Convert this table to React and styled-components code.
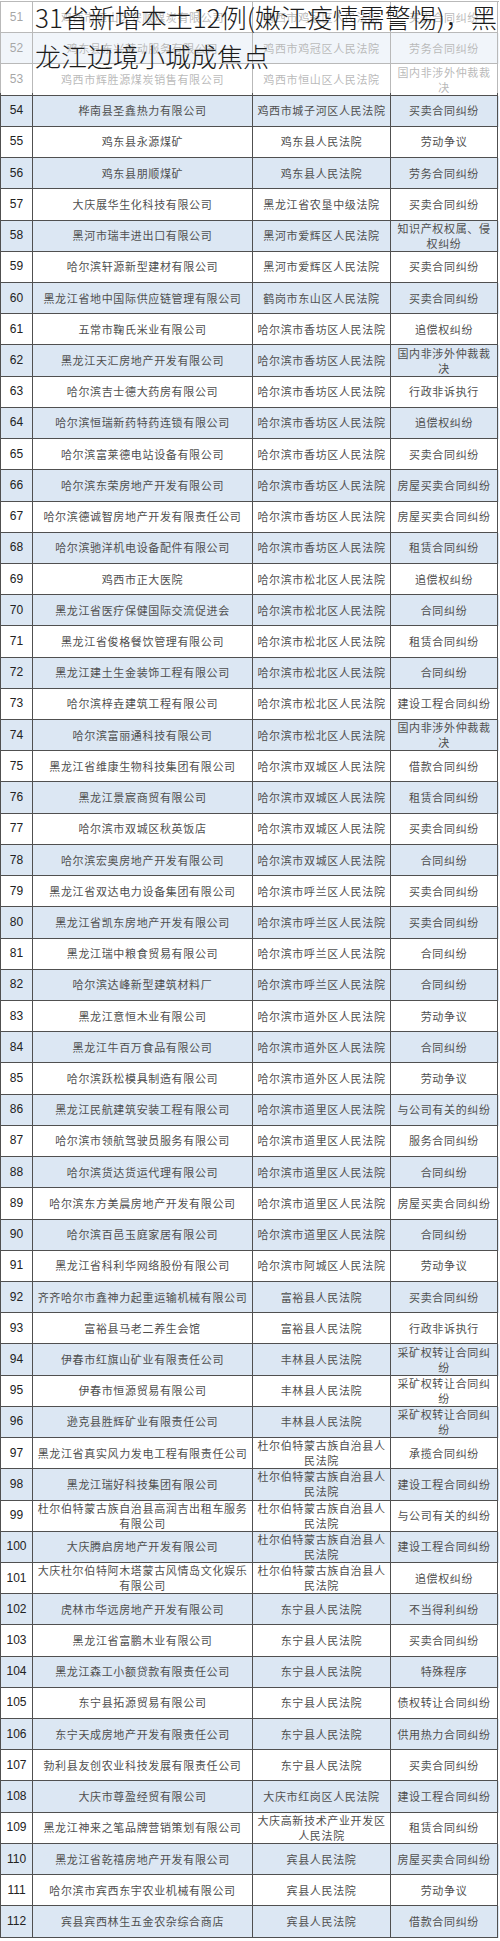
import React from "react";
import styled, { createGlobalStyle } from "styled-components";

const GlobalStyle = createGlobalStyle`
  html, body {
    margin: 0;
    padding: 0;
    background: #ffffff;
  }
  body {
    font-family: "Noto Sans CJK SC", "Liberation Sans", sans-serif;
  }
`;

const HRB_XF = "哈尔滨市香坊区人民法院";
const HRB_SB = "哈尔滨市松北区人民法院";
const HRB_SC = "哈尔滨市双城区人民法院";
const HRB_HL = "哈尔滨市呼兰区人民法院";
const HRB_DW = "哈尔滨市道外区人民法院";
const HRB_DL = "哈尔滨市道里区人民法院";
const DEB = "杜尔伯特蒙古族自治县人民法院";
const DN = "东宁县人民法院";
const BX = "宾县人民法院";

// [序号, 被执行企业, 法院, 案由]
const ROWS = [
    [51, "鸡西市恒山区安顺煤炭有限公司", "鸡西市鸡冠区人民法院", "买卖合同纠纷"],
    [52, "鸡东县东兴劳动服务有限公司", "鸡西市鸡冠区人民法院", "劳务合同纠纷"],
    [53, "鸡西市辉胜源煤炭销售有限公司", "鸡西市恒山区人民法院", "国内非涉外仲裁裁决"],
    [54, "桦南县圣鑫热力有限公司", "鸡西市城子河区人民法院", "买卖合同纠纷"],
    [55, "鸡东县永源煤矿", "鸡东县人民法院", "劳动争议"],
    [56, "鸡东县朋顺煤矿", "鸡东县人民法院", "劳务合同纠纷"],
    [57, "大庆展华生化科技有限公司", "黑龙江省农垦中级法院", "买卖合同纠纷"],
    [58, "黑河市瑞丰进出口有限公司", "黑河市爱辉区人民法院", "知识产权权属、侵权纠纷"],
    [59, "哈尔滨轩源新型建材有限公司", "黑河市爱辉区人民法院", "买卖合同纠纷"],
    [60, "黑龙江省地中国际供应链管理有限公司", "鹤岗市东山区人民法院", "买卖合同纠纷"],
    [61, "五常市鞠氏米业有限公司", HRB_XF, "追偿权纠纷"],
    [62, "黑龙江天汇房地产开发有限公司", HRB_XF, "国内非涉外仲裁裁决"],
    [63, "哈尔滨吉士德大药房有限公司", HRB_XF, "行政非诉执行"],
    [64, "哈尔滨恒瑞新药特药连锁有限公司", HRB_XF, "追偿权纠纷"],
    [65, "哈尔滨富莱德电站设备有限公司", HRB_XF, "买卖合同纠纷"],
    [66, "哈尔滨东荣房地产开发有限公司", HRB_XF, "房屋买卖合同纠纷"],
    [67, "哈尔滨德诚智房地产开发有限责任公司", HRB_XF, "房屋买卖合同纠纷"],
    [68, "哈尔滨驰洋机电设备配件有限公司", HRB_XF, "租赁合同纠纷"],
    [69, "鸡西市正大医院", HRB_SB, "追偿权纠纷"],
    [70, "黑龙江省医疗保健国际交流促进会", HRB_SB, "合同纠纷"],
    [71, "黑龙江省俊格餐饮管理有限公司", HRB_SB, "租赁合同纠纷"],
    [72, "黑龙江建土生金装饰工程有限公司", HRB_SB, "合同纠纷"],
    [73, "哈尔滨梓垚建筑工程有限公司", HRB_SB, "建设工程合同纠纷"],
    [74, "哈尔滨富丽通科技有限公司", HRB_SB, "国内非涉外仲裁裁决"],
    [75, "黑龙江省维康生物科技集团有限公司", HRB_SC, "借款合同纠纷"],
    [76, "黑龙江景宸商贸有限公司", HRB_SC, "租赁合同纠纷"],
    [77, "哈尔滨市双城区秋英饭店", HRB_SC, "买卖合同纠纷"],
    [78, "哈尔滨宏奥房地产开发有限公司", HRB_SC, "合同纠纷"],
    [79, "黑龙江省双达电力设备集团有限公司", HRB_HL, "买卖合同纠纷"],
    [80, "黑龙江省凯东房地产开发有限公司", HRB_HL, "买卖合同纠纷"],
    [81, "黑龙江瑞中粮食贸易有限公司", HRB_HL, "合同纠纷"],
    [82, "哈尔滨达峰新型建筑材料厂", HRB_HL, "合同纠纷"],
    [83, "黑龙江意恒木业有限公司", HRB_DW, "劳动争议"],
    [84, "黑龙江牛百万食品有限公司", HRB_DW, "合同纠纷"],
    [85, "哈尔滨跃松模具制造有限公司", HRB_DW, "劳动争议"],
    [86, "黑龙江民航建筑安装工程有限公司", HRB_DL, "与公司有关的纠纷"],
    [87, "哈尔滨市领航驾驶员服务有限公司", HRB_DL, "服务合同纠纷"],
    [88, "哈尔滨货达货运代理有限公司", HRB_DL, "合同纠纷"],
    [89, "哈尔滨东方美晨房地产开发有限公司", HRB_DL, "房屋买卖合同纠纷"],
    [90, "哈尔滨百邑玉庭家居有限公司", HRB_DL, "合同纠纷"],
    [91, "黑龙江省科利华网络股份有限公司", "哈尔滨市阿城区人民法院", "劳动争议"],
    [92, "齐齐哈尔市鑫神力起重运输机械有限公司", "富裕县人民法院", "买卖合同纠纷"],
    [93, "富裕县马老二养生会馆", "富裕县人民法院", "行政非诉执行"],
    [94, "伊春市红旗山矿业有限责任公司", "丰林县人民法院", "采矿权转让合同纠纷"],
    [95, "伊春市恒源贸易有限公司", "丰林县人民法院", "采矿权转让合同纠纷"],
    [96, "逊克县胜辉矿业有限责任公司", "丰林县人民法院", "采矿权转让合同纠纷"],
    [97, "黑龙江省真实风力发电工程有限责任公司", DEB, "承揽合同纠纷"],
    [98, "黑龙江瑞好科技集团有限公司", DEB, "建设工程合同纠纷"],
    [99, "杜尔伯特蒙古族自治县高润吉出租车服务有限公司", DEB, "与公司有关的纠纷"],
    [100, "大庆腾启房地产开发有限公司", DEB, "建设工程合同纠纷"],
    [101, "大庆杜尔伯特阿木塔蒙古风情岛文化娱乐有限公司", DEB, "追偿权纠纷"],
    [102, "虎林市华远房地产开发有限公司", DN, "不当得利纠纷"],
    [103, "黑龙江省富鹏木业有限公司", DN, "买卖合同纠纷"],
    [104, "黑龙江森工小额贷款有限责任公司", DN, "特殊程序"],
    [105, "东宁县拓源贸易有限公司", DN, "债权转让合同纠纷"],
    [106, "东宁天成房地产开发有限责任公司", DN, "供用热力合同纠纷"],
    [107, "勃利县友创农业科技发展有限责任公司", DN, "买卖合同纠纷"],
    [108, "大庆市尊盈经贸有限公司", "大庆市红岗区人民法院", "建设工程合同纠纷"],
    [109, "黑龙江神来之笔品牌营销策划有限公司", "大庆高新技术产业开发区人民法院", "租赁合同纠纷"],
    [110, "黑龙江省乾禧房地产开发有限公司", BX, "房屋买卖合同纠纷"],
    [111, "哈尔滨市宾西东宇农业机械有限公司", BX, "劳动争议"],
    [112, "宾县宾西林生五金农杂综合商店", BX, "借款合同纠纷"],
];

const Page = styled.div`
  position: relative;
  width: 500px;
  height: 1941px;
  overflow: hidden;
  background: #ffffff;
`;

const Sheet = styled.div`
  margin-top: 1px;
  width: 499px;
  border-left: 1px solid #505050;
  border-top: 1px solid #505050;
  box-sizing: border-box;
`;

const Row = styled.div`
  display: grid;
  grid-template-columns: 32px 220px 138px 107px;
  height: 31.23px;
  background: ${p => (p.$shade ? "#dce7f3" : "#ffffff")};
`;

const Cell = styled.div`
  display: flex;
  align-items: center;
  justify-content: center;
  box-sizing: border-box;
  padding: 0 4px;
  border-right: 1px solid #505050;
  border-bottom: 1px solid #505050;
  overflow: hidden;
  text-align: center;
  font-size: 11px;
  line-height: 15px;
  letter-spacing: 0.65px;
  color: #4f4f4f;
  font-family: "Noto Sans CJK SC", sans-serif;
`;

const NumCell = styled(Cell)`
  padding: 0;
  font-family: "Liberation Sans", Arial, sans-serif;
  font-size: 12px;
  letter-spacing: 0;
  color: #222222;
`;

const Wash = styled.div`
  position: absolute;
  top: 0;
  left: 0;
  width: 100%;
  height: 93px;
  background: rgba(255, 255, 255, 0.6);
`;

const Headline = styled.h1`
  position: absolute;
  top: -3px;
  left: 35px;
  margin: 0;
  white-space: nowrap;
  font-family: "Noto Sans CJK SC", sans-serif;
  font-weight: 300;
  font-size: 26px;
  line-height: 39px;
  color: #1c1c1c;
`;

const App = () => {
    return (
        <Page>
            <GlobalStyle/>
            <Sheet>
                {ROWS.map(([no, company, court, cause]) => (
                    <Row key={no} $shade={no % 2 === 0}>
                        <NumCell>{no}</NumCell>
                        <Cell>{company}</Cell>
                        <Cell>{court}</Cell>
                        <Cell>{cause}</Cell>
                    </Row>
                ))}
            </Sheet>
            <Wash/>
            <Headline>
                31省新增本土12例(嫩江疫情需警惕)，黑<br/>
                龙江边境小城成焦点
            </Headline>
        </Page>
    );
};

export default App;
